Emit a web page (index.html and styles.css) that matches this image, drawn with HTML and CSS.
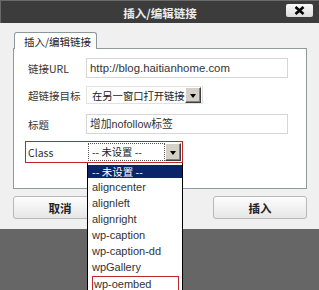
FILE: index.html
```html
<!DOCTYPE html>
<html>
<head>
<meta charset="utf-8">
<link rel="stylesheet" href="styles.css">
</head>
<body>
<div class="dialog">
  <div class="titlebar">
    <span></span>
    <span class="title">插入/编辑链接</span>
    <span class="close"><svg width="11" height="9" viewBox="0 0 11 9"><path d="M1.5 1 L9.5 8 M9.5 1 L1.5 8" stroke="#000" stroke-width="2.6"/></svg></span>
  </div>
  <div class="content">
    <div class="tabs"><span class="tab">插入/编辑链接</span></div>
    <div class="panel">
      <div class="row r1">
        <span class="label">链接URL</span>
        <span class="input">http://blog.haitianhome.com</span>
      </div>
      <div class="row r2">
        <span class="label">超链接目标</span>
        <span class="select"><span class="sel-text">在另一窗口打开链接</span><span class="arrow"><i></i></span></span>
      </div>
      <div class="row r3">
        <span class="label">标题</span>
        <span class="input">增加nofollow标签</span>
      </div>
      <div class="row r4">
        <span class="label">Class</span>
        <span class="select cls"><span class="sel-text focus">-- 未设置 --</span><span class="arrow"><i></i></span>
          <ul class="dropdown">
            <li class="sel">-- 未设置 --</li>
            <li>aligncenter</li>
            <li>alignleft</li>
            <li>alignright</li>
            <li>wp-caption</li>
            <li>wp-caption-dd</li>
            <li>wpGallery</li>
            <li class="marked">wp-oembed</li>
          </ul>
        </span>
      </div>
    </div>
    <div class="buttons">
      <span class="btn">取消</span>
      <span class="btn">插入</span>
    </div>
  </div>
</div>
</body>
</html>
```
FILE: styles.css
```css
html, body {
  margin: 0;
  padding: 0;
}
body {
  width: 319px;
  height: 290px;
  overflow: hidden;
  background: #666666;
  font-family: "Liberation Sans", "Noto Sans CJK SC", sans-serif;
  font-size: 11px;
  color: #333;
}
.dialog {
  background: #f0f0f0;
  height: 229px;
}
.titlebar {
  height: 23px;
  background: #3c3c3c;
  border-top: 1px solid #6a6a6a;
  border-left: 1px solid #6a6a6a;
  box-sizing: border-box;
  display: grid;
  grid-template-columns: 1fr auto 1fr;
  align-items: center;
}
.title {
  color: #ececec;
  font-weight: bold;
  font-size: 11.5px;
  font-family: "Noto Sans CJK SC", sans-serif;
  margin-top: 1px;
}
.close {
  justify-self: end;
  margin-right: 6px;
  margin-top: -3px;
  width: 27px;
  height: 13px;
  border-radius: 2px;
  background: linear-gradient(#fafafa, #dcdcdc);
  display: flex;
  align-items: center;
  justify-content: center;
}
.content {
  padding: 9px 13px 0 13px;
}
.tabs {
  display: flex;
  padding-left: 1px;
}
.tab {
  display: block;
  width: 83px;
  height: 17px;
  box-sizing: border-box;
  background: #fff;
  border: 1px solid #8c979a;
  border-bottom: none;
  border-radius: 3px 3px 0 0;
  padding: 2px 0 0 9px;
  font-family: "Noto Sans CJK SC", sans-serif;
  font-size: 10.5px;
  line-height: 14px;
  color: #222;
  position: relative;
  z-index: 1;
  margin-bottom: -1px;
}
.panel {
  width: 294px;
  height: 141px;
  box-sizing: border-box;
  background: #fff;
  border: 1px solid #919b9c;
  padding: 9px 0 0 14px;
}
.row {
  display: flex;
  align-items: center;
}
.label {
  width: 58px;
  font-family: "Noto Sans CJK SC", sans-serif;
  font-size: 10.5px;
  color: #333;
}
.r1, .r3 { height: 20px; }
.r2 { height: 18px; margin-top: 8px; }
.r3 { margin-top: 10px; }
.input {
  width: 202px;
  height: 20px;
  box-sizing: border-box;
  border: 1px solid #d6d6d6;
  padding-left: 3px;
  line-height: 18px;
  font-size: 11.4px;
  color: #333;
  font-family: "Liberation Sans", "Noto Sans CJK SC", sans-serif;
}
.r3 .input { font-size: 10.8px; }
.select {
  display: flex;
  align-items: center;
  width: 117px;
  height: 18px;
  box-sizing: border-box;
  border: 1px solid #e2e2e2;
  padding: 0 1px 0 5px;
  font-family: "Noto Sans CJK SC", sans-serif;
  font-size: 10.3px;
  color: #222;
}
.sel-text {
  flex: 1;
  white-space: nowrap;
  overflow: hidden;
}
.arrow {
  width: 16px;
  height: 16px;
  box-sizing: border-box;
  background: #d4d0c8;
  border: 1px solid;
  border-color: #fff #404040 #404040 #fff;
  box-shadow: inset -1px -1px 0 #808080;
  display: flex;
  align-items: center;
  justify-content: center;
}
.arrow i {
  display: block;
  width: 0;
  height: 0;
  border-left: 3.5px solid transparent;
  border-right: 3.5px solid transparent;
  border-top: 4px solid #000;
  margin-top: 1px;
}
.r4 {
  margin-top: 7px;
  margin-left: -3px;
  width: 158px;
  height: 22px;
  box-sizing: border-box;
  border: 1px solid #c0282d;
  padding-left: 2px;
}
.r4 .label { width: 59px; }
.select.cls {
  position: relative;
  width: 95px;
  height: 20px;
  border: none;
  padding: 1px 1px 1px 1px;
}
.focus {
  height: 18px;
  box-sizing: border-box;
  border: 1px dotted #555;
  padding-left: 3px;
  line-height: 16px;
}
.cls .arrow {
  height: 18px;
}
.dropdown {
  position: absolute;
  left: 0;
  top: 21px;
  width: 96px;
  margin: 0;
  padding: 0;
  list-style: none;
  background: #fff;
  border: 1px solid #000;
  border-top: none;
  box-sizing: border-box;
  font-family: "Liberation Sans", "Noto Sans CJK SC", sans-serif;
  font-size: 11px;
  color: #333;
  z-index: 5;
}
.dropdown li {
  height: 16px;
  line-height: 16px;
  padding-left: 4px;
  white-space: nowrap;
}
.dropdown li.sel {
  height: 13px;
  line-height: 13px;
  margin: 2px 0 1px;
  background: #0a246a;
  color: #fff;
  font-family: "Noto Sans CJK SC", sans-serif;
  font-size: 10.5px;
}
.dropdown li.marked {
  margin: 0 3px 0 4px;
  padding-left: 1px;
  border: 1px solid #c0282d;
  height: 14px;
  line-height: 14px;
  margin-top: 1px;
}
.buttons {
  display: flex;
  justify-content: space-between;
  width: 294px;
  margin-top: 7px;
}
.btn {
  width: 94px;
  height: 23px;
  box-sizing: border-box;
  border: 1px solid #b8b8b8;
  border-radius: 3px;
  background: linear-gradient(#fdfdfd, #e6e6e6);
  display: flex;
  align-items: center;
  justify-content: center;
  font-family: "Noto Sans CJK SC", sans-serif;
  font-weight: bold;
  font-size: 11.5px;
  color: #222;
}
```
